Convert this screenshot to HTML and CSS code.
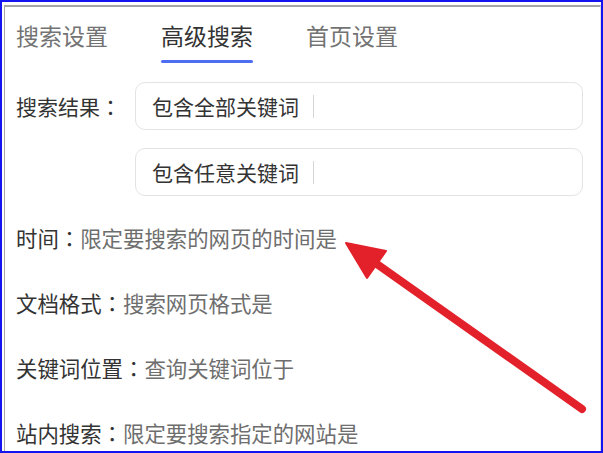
FILE: index.html
```html
<!DOCTYPE html>
<html lang="zh-CN">
<head>
    <meta charset="UTF-8">
    <meta name="viewport" content="width=device-width, initial-scale=1.0">
    <title>高级搜索</title>
    <link rel="stylesheet" href="styles.css">
</head>
<body>
    <div class="panel">
        <!-- Tabs -->
        <div class="tabs">
            <div class="tab">搜索设置</div>
            <div class="tab active">高级搜索</div>
            <div class="tab">首页设置</div>
        </div>

        <!-- Keyword inputs -->
        <div class="form">
            <div class="label">搜索结果<span class="colon" lang="zh-TW">：</span></div>
            <div class="field"><span class="field-text">包含全部关键词</span><span class="caret"></span></div>
            <div class="field"><span class="field-text">包含任意关键词</span><span class="caret"></span></div>
        </div>

        <!-- Option rows -->
        <div class="rows">
            <div class="row"><span class="key">时间<span class="colon" lang="zh-TW">：</span></span><span class="value">限定要搜索的网页的时间是</span></div>
            <div class="row"><span class="key">文档格式<span class="colon" lang="zh-TW">：</span></span><span class="value">搜索网页格式是</span></div>
            <div class="row"><span class="key">关键词位置<span class="colon" lang="zh-TW">：</span></span><span class="value">查询关键词位于</span></div>
            <div class="row"><span class="key">站内搜索<span class="colon" lang="zh-TW">：</span></span><span class="value">限定要搜索指定的网站是</span></div>
        </div>
    </div>

    <!-- Red pointer arrow -->
    <svg class="arrow" width="603" height="453" viewBox="0 0 603 453">
        <line x1="582" y1="409" x2="374" y2="262" stroke="#e3212b" stroke-width="8" stroke-linecap="round"/>
        <polygon points="346,243 386,251 367,278" fill="#e3212b" stroke="#e3212b" stroke-width="2" stroke-linejoin="round"/>
    </svg>
</body>
</html>
```

FILE: styles.css
```css
/* Advanced search panel */
html, body {
    margin: 0;
    height: 100%;
}

body {
    font-family: "Noto Sans CJK SC", "Noto Sans", sans-serif;
    background: #fff;
    color: #333;
    border: 2px solid #1414f0;
    box-sizing: border-box;
    overflow: hidden;
}

.panel {
    margin: 3px 0 0 2px;
    height: 100%;
    border-top: 2px solid #a4a4a4;
    border-left: 1px solid #a8a8a8;
    border-right: 1px solid #e2e2e2;
    padding: 0 11px;
    box-sizing: border-box;
}

.tabs {
    display: flex;
    gap: 53px;
    padding-top: 13px;
}

.tab {
    font-size: 23px;
    line-height: 30px;
    color: #737373;
    display: flex;
    flex-direction: column;
}

.tab::after {
    content: "";
    height: 3px;
    margin-top: 10px;
    border-radius: 2px;
}

.tab.active {
    color: #333;
}

.tab.active::after {
    background: #4e6ef2;
}

/* centred full-width colon */
.colon {
    font-family: "Noto Sans CJK TC", sans-serif;
}

.form {
    display: grid;
    grid-template-columns: 119px 448px;
    row-gap: 18px;
    margin-top: 19px;
}

.label {
    font-size: 21px;
    line-height: 48px;
}

.field {
    grid-column: 2;
    height: 48px;
    box-sizing: border-box;
    border: 1px solid #e3e3e3;
    border-radius: 10px;
    padding-left: 16px;
    display: flex;
    align-items: center;
}

.field-text {
    font-size: 21px;
    color: #333;
}

.caret {
    width: 0;
    height: 23px;
    margin-left: 14px;
    border-left: 1px solid #d6d6d6;
}

.rows {
    margin-top: 9px;
}

.row {
    font-size: 21.4px;
    line-height: 65px;
    white-space: nowrap;
}

.key {
    color: #333;
}

.value {
    color: #6e6e6e;
}

.arrow {
    position: absolute;
    top: 0;
    left: 0;
    pointer-events: none;
}
```
